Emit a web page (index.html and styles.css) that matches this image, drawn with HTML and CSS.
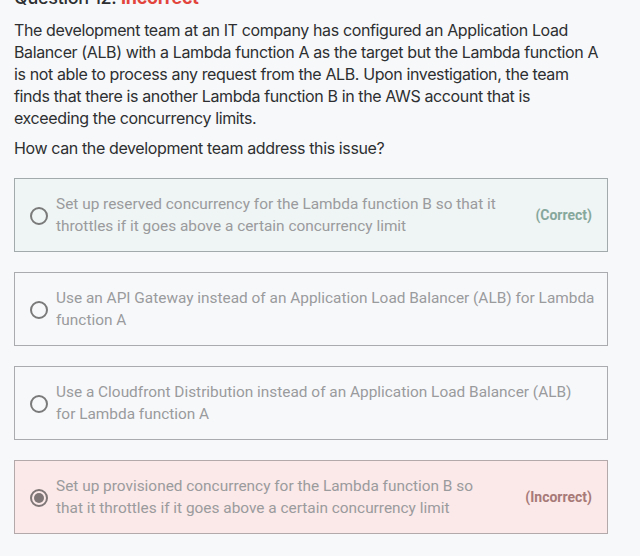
FILE: index.html
```html
<!DOCTYPE html>
<html>
<head>
<meta charset="utf-8">
<link rel="stylesheet" href="styles.css">
</head>
<body>
<div class="page">
  <h2 class="title">Question 12: <span class="bad">Incorrect</span></h2>
  <p class="q">The development team at an IT company has configured an Application Load Balancer (ALB) with a Lambda function A as the target but the Lambda function A is not able to process any request from the ALB. Upon investigation, the team finds that there is another Lambda function B in the AWS account that is exceeding the concurrency limits.</p>
  <p class="q ask">How can the development team address this issue?</p>
  <div class="options">
    <div class="opt correct">
      <span class="radio"></span>
      <span class="txt">Set up reserved concurrency for the Lambda function B so that it throttles if it goes above a certain concurrency limit</span>
      <span class="tag">(Correct)</span>
    </div>
    <div class="opt">
      <span class="radio"></span>
      <span class="txt">Use an API Gateway instead of an Application Load Balancer (ALB) for Lambda function A</span>
    </div>
    <div class="opt">
      <span class="radio"></span>
      <span class="txt">Use a Cloudfront Distribution instead of an Application Load Balancer (ALB) for&nbsp;Lambda function A</span>
    </div>
    <div class="opt wrong">
      <span class="radio checked"></span>
      <span class="txt">Set up provisioned concurrency for the Lambda function B so that it throttles if it goes above a certain concurrency limit</span>
      <span class="tag">(Incorrect)</span>
    </div>
  </div>
</div>
</body>
</html>
```
FILE: styles.css
```css
html, body {
  margin: 0;
  padding: 0;
  background: #f7f8fa;
}
body {
  overflow: hidden;
}
.page {
  padding: 0 0 0 14px;
  margin-top: -14px;
}
.title {
  font-family: "Inter", "Liberation Sans", sans-serif;
  font-size: 18px;
  font-weight: 500;
  color: #2d2f31;
  margin: 0 0 9px 0;
  line-height: 24px;
  letter-spacing: -0.3px;
}
.title .bad {
  color: #e2453c;
  font-weight: 700;
}
.q {
  font-family: "Inter", "Liberation Sans", sans-serif;
  font-size: 16px;
  line-height: 22px;
  color: #2d2f31;
  margin: 0 0 8px 0;
  letter-spacing: -0.38px;
  width: 590px;
}
.ask {
  margin-bottom: 19px;
}
.options {
  display: flex;
  flex-direction: column;
  gap: 20px;
  width: 594px;
}
.opt {
  box-sizing: border-box;
  height: 74px;
  border: 1px solid #a9abae;
  display: flex;
  align-items: center;
  padding: 0 12px 0 15px;
  font-family: "Roboto", "Liberation Sans", sans-serif;
  font-size: 15.4px;
  line-height: 22px;
  color: #9a9b9d;
}
.opt.correct {
  background: #eff4f4;
  border-color: #a3aaab;
}
.opt.wrong {
  background: #fbe8e8;
  border-color: #b3a9aa;
}
.radio {
  flex: none;
  box-sizing: border-box;
  width: 18px;
  height: 18px;
  border: 2px solid #7a7a7a;
  border-radius: 50%;
  margin-right: 8px;
  margin-top: 2px;
  position: relative;
}
.radio.checked {
  border-color: #7f7777;
}
.radio.checked::after {
  content: "";
  position: absolute;
  left: 2px;
  top: 2px;
  width: 10px;
  height: 10px;
  border-radius: 50%;
  background: #7f7777;
}
.txt {
  flex: 1;
}
.tag {
  flex: none;
  margin-left: 24px;
  margin-right: 3px;
  font-weight: 700;
  font-size: 14px;
}
.correct .tag {
  color: #86a89c;
}
.wrong .tag {
  color: #a77a78;
}
```
